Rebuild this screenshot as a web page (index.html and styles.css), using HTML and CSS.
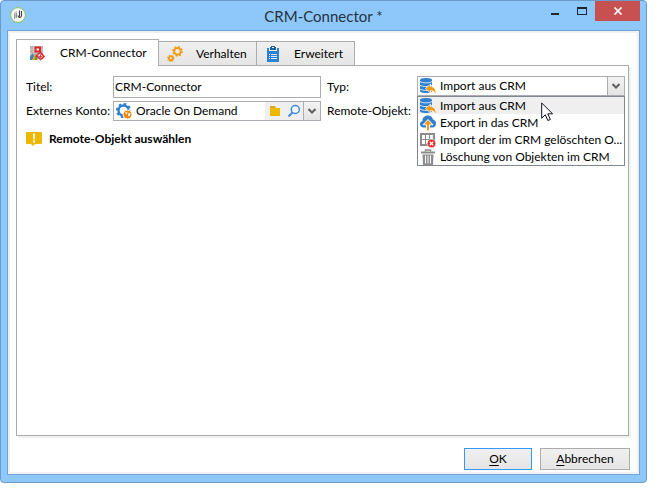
FILE: index.html
```html
<!DOCTYPE html>
<html lang="de">
<head>
<meta charset="utf-8">
<title>CRM-Connector</title>
<link rel="stylesheet" href="styles.css">
</head>
<body>
<svg class="defs" aria-hidden="true">
  <symbol id="db" viewBox="0 0 16 16">
    <path fill="#2f80cf" d="M0 2C0 .8 2.700 0 6 0s6 .8 6 2v11c0 1.200-2.700 2-6 2s-6-.8-6-2z"/>
    <path fill="none" stroke="#fff" stroke-width=".8" d="M0 3.500c2 1.800 10 1.800 12 0M0 7.200c2 1.800 10 1.800 12 0M0 11c2 1.800 10 1.800 12 0"/>
    <path fill="#f39a12" stroke="#fff" stroke-width=".7" d="M5.500 10.500 10.500 6v2.500c3.500.2 5.500 2.700 5.500 7h-1.200c-.5-2.300-1.800-3-4.300-3V15z"/>
  </symbol>
  <symbol id="cloud" viewBox="0 0 16 16">
    <path fill="#2f80cf" d="M3.500 12.500C1.500 12.500 0 11 0 9.200 0 7.500 1 6.300 2.500 6 2.300 2.800 4.500.5 7.800.5c2.700 0 4.700 1.600 5.200 4 2 .4 3 2 3 3.900 0 2.400-1.500 4.100-3.500 4.100z"/>
    <path fill="#f39a12" stroke="#fff" d="M8 4.500 13 9.800H9.500v6h-3v-6H3z"/>
  </symbol>
  <symbol id="table" viewBox="0 0 16 16">
    <path fill="#8b8b8b" d="M0 1h15v13H0z"/>
    <path fill="#fff" d="M2 3h3v4H2zM6 3h3v4H6zM10 3h3v4h-3zM2 8h3v4H2zM6 8h3v4H6z"/>
    <circle cx="11.500" cy="11.500" r="4.300" fill="#e02b2b" stroke="#fff" stroke-width=".6"/>
    <path stroke="#fff" stroke-width="1.300" d="m9.800 9.800 3.400 3.400m0-3.400-3.400 3.400"/>
  </symbol>
  <symbol id="trash" viewBox="0 0 16 16">
    <path fill="none" stroke="#8b8b8b" stroke-width="1.500" d="M5.500 2.500V1h5v1.500"/>
    <path fill="#8b8b8b" d="M1 2.500h14v2H1zM2.500 5.500h11L13 16H3z"/>
    <path stroke="#fff" d="M5.500 6.500v8M8 6.500v8M10.500 6.500v8"/>
  </symbol>
</svg>

<main class="window">
  <header class="titlebar">
    <svg class="app-icon" viewBox="0 0 16 16" aria-hidden="true">
      <circle cx="8" cy="8" r="7.400" fill="#f4f6f3" stroke="#8fbf63"/>
      <path fill="#c4c4c4" d="M4 6 7 4v6l-3 2z"/>
      <path fill="none" stroke="#8a8a8a" stroke-width=".8" d="M4.500 7v5M6.500 6v5"/>
      <path fill="none" stroke="#444" stroke-width="1.100" d="M9.500 3.500v6M8 8.500c0 2.500 3.500 2.500 3.500 0V4"/>
    </svg>
    <h1 class="title">CRM-Connector *</h1>
    <div class="caption">
      <button class="cap" type="button" aria-label="Minimieren"><svg viewBox="0 0 10 8"><path fill="#1c2733" d="M1 6h8v2H1z"/></svg></button>
      <button class="cap" type="button" aria-label="Maximieren"><svg viewBox="0 0 10 8"><path fill="#1c2733" fill-rule="evenodd" d="M0 0h10v8H0zM1 2v5h8V2z"/></svg></button>
      <button class="cap close" type="button" aria-label="Schließen"><svg viewBox="0 0 10 8"><path stroke="#fff" stroke-width="1.700" d="m1.500.5 7 7m0-7-7 7"/></svg></button>
    </div>
  </header>

  <form class="client">
    <div class="tabs" role="tablist">
      <button class="tab active" type="button" role="tab" aria-selected="true">
        <svg class="icon" viewBox="0 0 16 16" aria-hidden="true">
          <path fill="#b9b5ae" d="M1 1h13v13H1z"/>
          <path stroke="#cfcbc5" d="M1 4.500h13M1 8.500h5M4.500 1v8"/>
          <path fill="#3c83c4" d="M1 15v-3l3-4 2 7z"/><path fill="#f0a51c" d="m3 15 3-6 3 6z"/><path fill="#4f9b4a" d="M6 11h2v4H6z"/>
          <path fill="#fff" stroke="#e3262c" stroke-width="2" d="M6.500 2.500H11v4H6.500z"/>
          <path fill="#fff" stroke="#e3262c" stroke-width="1.500" d="m7.500 10.500 4-3 3.500 4-3.500 3z"/>
          <path stroke="#e3262c" d="m9.500 11 4 1m-1.500-3-1 4"/>
        </svg>CRM-Connector</button>
      <button class="tab" type="button" role="tab">
        <svg class="icon" viewBox="0 0 16 16" aria-hidden="true">
          <g fill="none" stroke="#f39a12">
            <circle cx="10.500" cy="5.300" r="3.300" stroke-width="1.900"/>
            <circle cx="10.500" cy="5.300" r="4.600" stroke-width="1.500" stroke-dasharray="1.800 1.800"/>
            <circle cx="3.800" cy="12.300" r="2" stroke-width="1.700"/>
            <circle cx="3.800" cy="12.300" r="3.100" stroke-width="1.200" stroke-dasharray="1.220 1.220"/>
          </g>
        </svg>Verhalten</button>
      <button class="tab" type="button" role="tab">
        <svg class="icon" viewBox="0 0 16 16" aria-hidden="true">
          <path fill="#2f80cf" d="M2 2h12v14H2z"/>
          <path fill="#f0f0f0" d="M4 2h8v3H4z"/>
          <path fill="#245f9d" fill-rule="evenodd" d="M6 0h4v1h1v3H5V1h1zM7 1v1h2V1z"/>
          <path stroke="#d7eafa" d="M4 8.500h1m1 0h6M4 10.500h1m1 0h6M4 12.500h1m1 0h6"/>
        </svg>Erweitert</button>
    </div>

    <section class="panel">
      <div class="fields">
        <label for="titel">Titel:</label>
        <input class="text" id="titel" value="CRM-Connector">

        <label class="second" for="typ">Typ:</label>
        <div class="combo">
          <svg class="icon" aria-hidden="true"><use href="#db"/></svg>
          <select id="typ"><option>Import aus CRM</option></select>
          <span class="arrow"><svg viewBox="0 0 8 6"><path d="m.5 1 3.500 3.500L7.500 1"/></svg></span>
          <ul class="popup" role="listbox" aria-label="Typ">
            <li class="selected" role="option" aria-selected="true"><svg class="icon"><use href="#db"/></svg>Import aus CRM
              <svg class="pointer" viewBox="0 0 13 20" aria-hidden="true"><path fill="#fff" stroke="#10101c" d="M.7 1v15.200l3.600-3.400 2.500 5.700 2.500-1-2.500-5.700h4.800z"/></svg></li>
            <li role="option"><svg class="icon"><use href="#cloud"/></svg>Export in das CRM</li>
            <li role="option"><svg class="icon"><use href="#table"/></svg>Import der im CRM gelöschten O...</li>
            <li role="option"><svg class="icon"><use href="#trash"/></svg>Löschung von Objekten im CRM</li>
          </ul>
        </div>

        <label for="konto">Externes Konto:</label>
        <div class="combo">
          <svg class="icon" viewBox="0 0 16 16" aria-hidden="true">
            <g fill="none" stroke="#2f80cf"><circle cx="7.500" cy="7.500" r="5" stroke-width="2.400"/><circle cx="7.500" cy="7.500" r="6.600" stroke-width="2" stroke-dasharray="2.590 2.590"/></g>
            <circle cx="11.500" cy="11.500" r="4.500" fill="#f08c14" stroke="#fff"/>
            <path fill="#fff" d="m9 9 2.500.5-1 2zM12.500 10l2 .5-1 3-1.500-1z"/>
          </svg>
          <select id="konto"><option>Oracle On Demand</option></select>
          <button class="tool" type="button" aria-label="Ordner"><svg viewBox="0 0 14 14"><path fill="#e3a32a" d="M2 2h5l1 2H2z"/><path fill="#efb800" d="M2 4h10v8H2z"/></svg></button>
          <button class="tool" type="button" aria-label="Suchen"><svg viewBox="0 0 14 14"><circle cx="8.300" cy="5.500" r="4" fill="#f8fbfe" stroke="#3c8cd6" stroke-width="1.500"/><path stroke="#3c8cd6" stroke-width="2" d="M5.500 8.500 1.500 12.500"/></svg></button>
          <span class="arrow"><svg viewBox="0 0 8 6"><path d="m.5 1 3.500 3.500L7.500 1"/></svg></span>
        </div>

        <span class="second">Remote-Objekt:</span>
      </div>

      <p class="notice">
        <svg class="icon" viewBox="0 0 16 16" aria-hidden="true"><path fill="#efb800" d="M1 1h14q1 0 1 1v10q0 1-1 1H9l-2 2-2-2H1q-1 0-1-1V2q0-1 1-1z"/><path fill="#fff" d="M7 2.500h2l-.3 6H7.300zM7 9.500h2v2H7z"/></svg>
        Remote-Objekt auswählen</p>
    </section>

    <footer class="actions">
      <button class="button default" type="submit"><span><u>O</u>K</span></button>
      <button class="button wide" type="button"><span><u>A</u>bbrechen</span></button>
    </footer>
  </form>
</main>
</body>
</html>
```
FILE: styles.css
```css
* { box-sizing: border-box; }

body {
  margin: 0;
  padding: 0 23px 17px 0;
  height: 100vh;
  background: #fff;
  color: #000;
  font: 12px/16px Lato, "Open Sans", sans-serif;
}

button, input, select { font: inherit; color: inherit; margin: 0; }
svg { display: block; flex: none; }
.defs { position: absolute; width: 0; height: 0; }
.icon { width: 16px; height: 16px; }

.window {
  display: flex;
  flex-direction: column;
  height: 100%;
  padding: 0 6px 7px;
  border: 1px solid #6a9bc9;
  border-radius: 4px;
  background: #8ec8fb;
}

.titlebar {
  display: grid;
  grid-template-columns: 1fr auto 1fr;
  height: 29px;
  flex: none;
}
.app-icon { width: 16px; height: 16px; margin: 6px 0 0 3px; }
.title { margin: 0; color: #26323e; font-size: 15px; font-weight: 400; line-height: 30px; }
.caption { display: flex; justify-content: flex-end; }
.cap {
  display: grid;
  place-items: center;
  width: 27px;
  height: 20px;
  padding: 0;
  border: 0;
  background: none;
}
.cap svg { width: 10px; height: 8px; }
.close { width: 45px; background: #c75050; }

.client {
  display: flex;
  flex-direction: column;
  flex: 1;
  padding: 6px 6px 4px;
  border: 1px solid #6fa4d4;
  background: #fff;
  box-shadow: inset 0 0 0 2px #f0f0f0;
}

.tabs { display: flex; align-items: flex-end; padding-left: 2px; height: 28px; }
.tab {
  display: flex;
  align-items: center;
  gap: 13px;
  width: 98px;
  height: 24px;
  padding: 0 0 0 8px;
  border: 1px solid #acacac;
  border-width: 1px 1px 0 0;
  background: linear-gradient(#f0f0f0, #e5e5e5);
  white-space: nowrap;
}
.tab.active {
  position: relative;
  gap: 15px;
  width: 143px;
  height: 27px;
  margin-bottom: -1px;
  padding-left: 12px;
  border-left-width: 1px;
  background: #fff;
}

.panel {
  flex: 1;
  margin: 0 4px 0 2px;
  padding: 10px 3px 0 9px;
  border: 1px solid #acacac;
  box-shadow: 2px 2px 0 #f0f0f0;
}
.fields {
  display: grid;
  grid-template-columns: 87px 1fr 96px 1fr;
  grid-template-rows: 22px 20px;
  row-gap: 3px;
  align-items: center;
  white-space: nowrap;
}
.second { padding-left: 6px; }
.text {
  width: 100%;
  height: 22px;
  padding: 0 1px 2px;
  border: 1px solid #abadb3;
  background: #fff;
}

.combo {
  position: relative;
  display: flex;
  align-items: center;
  align-self: start;
  height: 20px;
  min-width: 0;
  padding-left: 2px;
  border: 1px solid #abadb3;
  background: #fff;
}
.combo select {
  appearance: none;
  flex: 1;
  min-width: 0;
  height: 18px;
  padding: 0 0 0 4px;
  border: 0;
  background: none;
}
.arrow {
  display: grid;
  place-items: center;
  width: 17px;
  height: 18px;
  border-left: 1px solid #abadb3;
  background: linear-gradient(#f2f2f2, #e4e4e4);
}
.arrow svg { width: 8px; height: 6px; }
.arrow path { fill: none; stroke: #606060; stroke-width: 2; }
.tool {
  display: grid;
  place-items: center;
  width: 19px;
  height: 18px;
  padding: 0;
  border: 0;
  background: #efefef;
}
.tool svg { width: 14px; height: 14px; }

.popup {
  position: absolute;
  z-index: 1;
  top: 19px;
  left: -1px;
  right: -1px;
  margin: 0;
  padding: 0;
  border: 1px solid #828790;
  background: #fff;
  list-style: none;
}
.popup li {
  position: relative;
  display: flex;
  align-items: center;
  gap: 4px;
  height: 17px;
  padding-left: 2px;
}
.popup .selected { background: #efefef; }
.pointer { position: absolute; z-index: 2; left: 123px; top: 5px; width: 13px; height: 20px; }

.notice { display: flex; align-items: center; gap: 7px; margin: 10px 0; font-weight: 700; }

.actions { display: flex; justify-content: flex-end; gap: 8px; padding: 12px 3px 0 0; height: 34px; }
.button {
  width: 68px;
  height: 22px;
  padding: 0;
  border: 1px solid #acacac;
  background: linear-gradient(#f0f0f0, #e5e5e5);
}
.button.default { border-color: #3399ff; }
.wide { width: 90px; }
.button u { text-underline-offset: 2px; }
```
